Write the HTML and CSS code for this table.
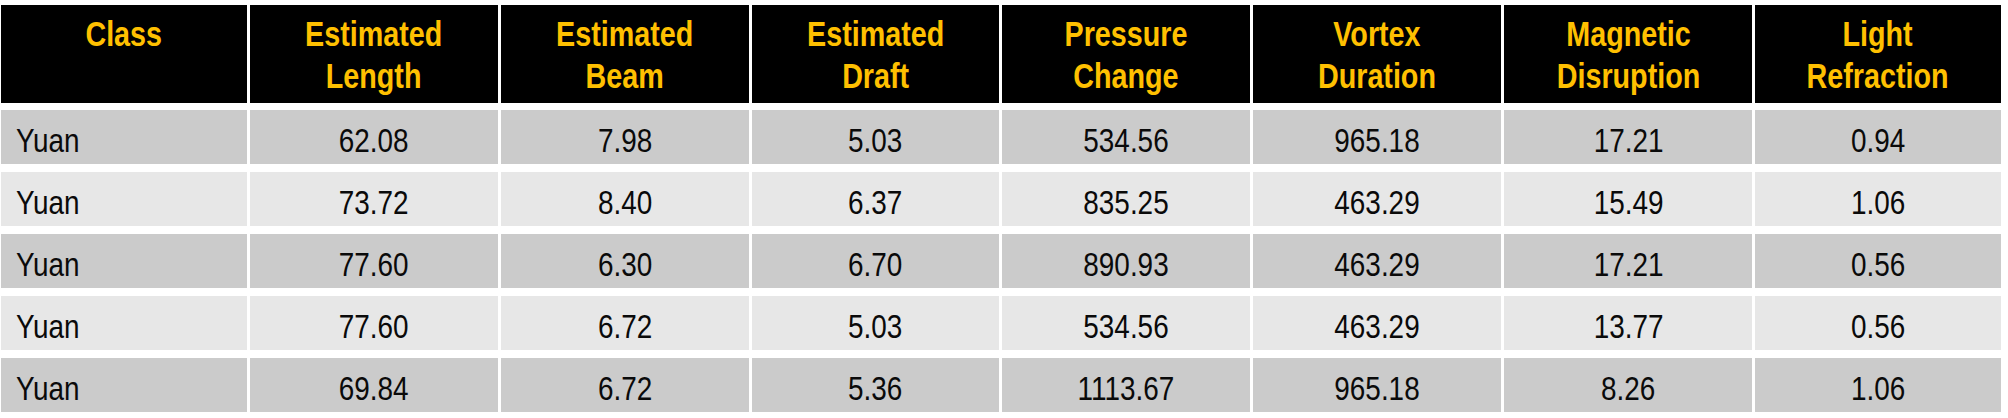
FILE: index.html
```html
<!DOCTYPE html>
<html>
<head>
<meta charset="utf-8">
<link rel="stylesheet" href="styles.css">
</head>
<body>
<div class="table">
  <div class="row head">
    <div class="cell"><span>Class</span></div>
    <div class="cell"><span>Estimated<br>Length</span></div>
    <div class="cell"><span>Estimated<br>Beam</span></div>
    <div class="cell"><span>Estimated<br>Draft</span></div>
    <div class="cell"><span>Pressure<br>Change</span></div>
    <div class="cell"><span>Vortex<br>Duration</span></div>
    <div class="cell"><span>Magnetic<br>Disruption</span></div>
    <div class="cell"><span>Light<br>Refraction</span></div>
  </div>
  <div class="row odd">
    <div class="cell first"><span>Yuan</span></div>
    <div class="cell"><span>62.08</span></div>
    <div class="cell"><span>7.98</span></div>
    <div class="cell"><span>5.03</span></div>
    <div class="cell"><span>534.56</span></div>
    <div class="cell"><span>965.18</span></div>
    <div class="cell"><span>17.21</span></div>
    <div class="cell"><span>0.94</span></div>
  </div>
  <div class="row even">
    <div class="cell first"><span>Yuan</span></div>
    <div class="cell"><span>73.72</span></div>
    <div class="cell"><span>8.40</span></div>
    <div class="cell"><span>6.37</span></div>
    <div class="cell"><span>835.25</span></div>
    <div class="cell"><span>463.29</span></div>
    <div class="cell"><span>15.49</span></div>
    <div class="cell"><span>1.06</span></div>
  </div>
  <div class="row odd">
    <div class="cell first"><span>Yuan</span></div>
    <div class="cell"><span>77.60</span></div>
    <div class="cell"><span>6.30</span></div>
    <div class="cell"><span>6.70</span></div>
    <div class="cell"><span>890.93</span></div>
    <div class="cell"><span>463.29</span></div>
    <div class="cell"><span>17.21</span></div>
    <div class="cell"><span>0.56</span></div>
  </div>
  <div class="row even">
    <div class="cell first"><span>Yuan</span></div>
    <div class="cell"><span>77.60</span></div>
    <div class="cell"><span>6.72</span></div>
    <div class="cell"><span>5.03</span></div>
    <div class="cell"><span>534.56</span></div>
    <div class="cell"><span>463.29</span></div>
    <div class="cell"><span>13.77</span></div>
    <div class="cell"><span>0.56</span></div>
  </div>
  <div class="row odd">
    <div class="cell first"><span>Yuan</span></div>
    <div class="cell"><span>69.84</span></div>
    <div class="cell"><span>6.72</span></div>
    <div class="cell"><span>5.36</span></div>
    <div class="cell"><span>1113.67</span></div>
    <div class="cell"><span>965.18</span></div>
    <div class="cell"><span>8.26</span></div>
    <div class="cell"><span>1.06</span></div>
  </div>
</div>
</body>
</html>
```
FILE: styles.css
```css
html, body {
  margin: 0;
  background: #ffffff;
}
body {
  padding: 5px 0 0 1px;
  font-family: "Liberation Sans", Arial, sans-serif;
}
.table {
  width: 2000px;
  display: flex;
  flex-direction: column;
  gap: 8px;
}
.row {
  display: grid;
  grid-template-columns: 246px repeat(6, 1fr) 246px;
  column-gap: 3px;
}
.cell {
  text-align: center;
  box-sizing: border-box;
}
.cell span {
  display: inline-block;
  transform: scaleX(0.82);
  transform-origin: center top;
}
.head {
  height: 98px;
  margin-bottom: -1px;
}
.head .cell {
  background: #000000;
  color: #ffc000;
  font-weight: bold;
  font-size: 35px;
  line-height: 41.5px;
  padding-top: 8px;
}
.odd .cell, .even .cell {
  height: 54px;
  font-size: 34px;
  line-height: 48px;
  padding-top: 6px;
  color: #0a0a0a;
}
.odd .cell {
  background: #cbcbcb;
}
.even .cell {
  background: #e7e7e7;
}
.cell.first {
  text-align: left;
  padding-left: 15px;
}
.cell.first span {
  transform-origin: left top;
}
```
